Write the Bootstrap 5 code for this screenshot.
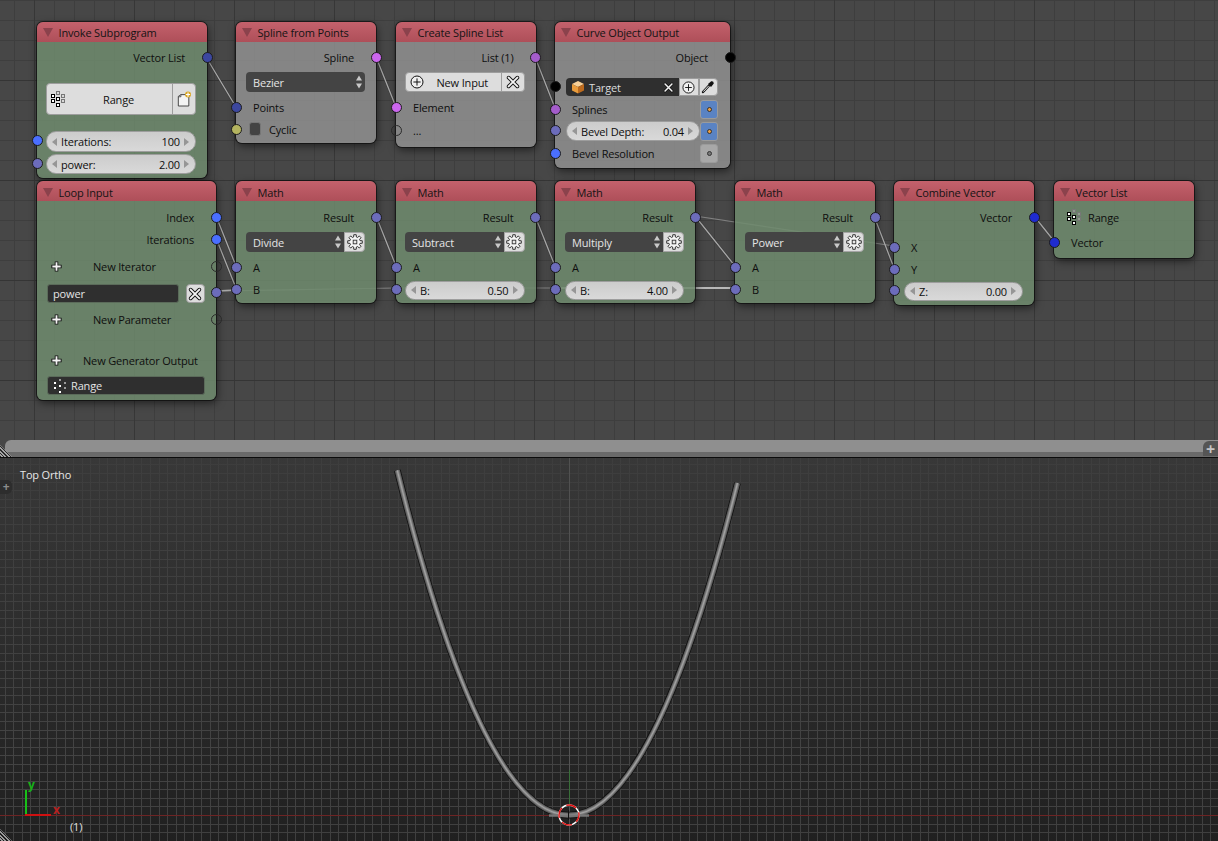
<!DOCTYPE html>
<html lang="en">
<head>
  <meta charset="UTF-8" />
  <meta name="viewport" content="width=device-width, initial-scale=1.0"/>
  <title>Node Editor</title>
  <link href="https://cdn.jsdelivr.net/npm/bootstrap@5.3.3/dist/css/bootstrap.min.css" rel="stylesheet">
  <style>
    body { background: #222; font: 11px/1 "Open Sans", "Noto Sans", sans-serif; letter-spacing: -.16px; color: #0e0e0e; }
    .ed-top {
      height: 440px;
      background-color: #474747;
      background-image:
        linear-gradient(#353535 1px, transparent 1px),
        linear-gradient(90deg, #373737 1px, transparent 1px),
        linear-gradient(#3e3e3e 1px, transparent 1px),
        linear-gradient(90deg, #3e3e3e 1px, transparent 1px);
      background-size: 100px 100px, 100px 100px, 20px 20px, 20px 20px;
      background-position: 0 80px, 34px 0, 0 0, 14px 0;
    }
    .ed-links { left: 0; top: 0; width: 1218px; height: 440px; }
    .lk-under { stroke: #2c2c2c; stroke-width: 2.4; opacity: .45; fill: none; }
    .lk { stroke: #a9a9a9; stroke-width: 1.3; fill: none; }
    .lk-faint { stroke: #a9a9a9; stroke-width: 1.2; opacity: .6; fill: none; }
    .lk-thick { stroke: #b8b8b8; stroke-width: 2; fill: none; }

    /* nodes, placed on the canvas */
    .card.nd { position: absolute; border: 0; border-radius: 6px; background: transparent;
      box-shadow: 0 0 0 1px rgba(15,15,15,.75), 1px 3px 9px rgba(0,0,0,.55); }
    #n-invoke { left: 37px; top: 22px; width: 170px; height: 156px; }
    #n-spline { left: 236px; top: 22px; width: 140px; height: 121px; }
    #n-list { left: 396px; top: 22px; width: 139.5px; height: 125px; }
    #n-curve { left: 555px; top: 22px; width: 175px; height: 146px; }
    #n-loop { left: 37px; top: 181px; width: 179px; height: 219px; }
    #n-m1 { left: 236px; top: 181px; width: 140px; height: 122px; }
    #n-m2 { left: 396px; top: 181px; width: 139.5px; height: 122px; }
    #n-m3 { left: 555px; top: 181px; width: 140px; height: 122px; }
    #n-m4 { left: 735px; top: 181px; width: 140px; height: 122px; }
    #n-comb { left: 894px; top: 181px; width: 140px; height: 124px; }
    #n-vlist { left: 1054px; top: 181px; width: 140px; height: 77px; }

    .card-header.nd-head { height: 20px; padding: 0 0 0 6px; border: 0; border-radius: 6px 6px 0 0;
      background: linear-gradient(#c4616c, #ae4f59); color: #141414; font-size: 11px; }
    .nd-low .card-header.nd-head { padding-top: 2px; }
    .nd-tri { width: 0; height: 0; margin-right: 5.5px; border: 5px solid transparent; border-bottom: 0; border-top: 9px solid #8b424c; }
    .card-body.nd-green, .card-body.nd-gray { padding: 0; border-radius: 0 0 6px 6px; }
    .card-body.nd-green { background: rgba(111,139,109,.86); }
    .card-body.nd-gray { background: rgba(143,143,143,.86); }

    .nd-r { position: relative; height: 22px; }
    .nd-t { padding-bottom: 2px; }
    .nd-out { padding-right: 22px; justify-content: flex-end; padding-bottom: 2px; }
    .nd-in { padding-left: 17px; padding-bottom: 2px; }
    .nd-w { padding: 0 11px 0 10px; }
    .nd-w2 { padding: 0 12px 0 11px; }
    .nd-w3 { padding: 0 11px 0 9px; }
    .g1 { margin-top: 1px; } .g2 { margin-top: 2px; } .g3 { margin-top: 3px; } .g4 { margin-top: 4px; }
    .g5 { margin-top: 5px; } .g6 { margin-top: 6px; } .g8 { margin-top: 8px; } .g9 { margin-top: 9px; }
    .g14 { margin-top: 14px; } .g16 { margin-top: 16px; } .g19 { margin-top: 19px; }
    .gm1 { margin-top: -1px; }
    .h18 { height: 18px; } .h19 { height: 19px; } .h20 { height: 20px; } .h21 { height: 21px; } .h32 { height: 32px; }

    /* sockets */
    .sk { position: absolute; top: calc(50% - 6.5px); width: 11px; height: 11px; border-radius: 50%; border: 1px solid #1c1c1c; z-index: 2; }
    .sk-l { left: -5.5px; } .sk-r { right: -5.5px; }
    .sk-num { background: #6c6cbb; }
    .sk-int { background: #4a6fff; }
    .sk-vec { background: #3c479f; }
    .sk-vec2 { background: #1f2bcf; }
    .sk-spl { background: #cc66ef; }
    .sk-spl2 { background: #a45ccb; }
    .sk-bool { background: #b4b45f; }
    .sk-obj { background: #000; }
    .sk-none { background: transparent; border-color: #2a2a2a; }

    /* widgets */
    .btn.nd-btn { padding: 0; border-radius: 4px; border: 1px solid #9d9d9d; background: #dddddd; color: #111; font-size: 11px; line-height: 1; letter-spacing: inherit; }
    .nd-pill { border-radius: 10px; border: 1px solid #9d9d9d; background: linear-gradient(#cccccc, #d9d9d9); padding: 0 6px 0 5px; }
    .nd-arw { width: 0; height: 0; border: 4px solid transparent; }
    .nd-arw-l { border-left: 0; border-right: 5px solid #969696; }
    .nd-arw-r { border-right: 0; border-left: 5px solid #969696; }
    .nd-sel { border-radius: 4px; background: #444; color: #e4e4e4; padding: 0 3px 0 7px; flex: 1 1 auto; }
    .nd-sel-cut { border-radius: 4px 0 0 4px; }
    .btn.nd-gear { width: 21px; height: 20px; border-radius: 0 4px 4px 0; border-color: #a5a5a5; }
    .nd-dark { border-radius: 3px; background: #2f2f2f; color: #e4e4e4; padding: 0 5px; border: 1px solid #5b6b5a; }
    .nd-target { width: 113px; border-radius: 4px 0 0 4px; background: #2f2f2f; color: #dcdcdc; padding: 0 5px; }
    .btn.nd-sq { width: 19.5px; height: 19px; border-radius: 0; flex: none; }
    .btn.nd-rnd { border-radius: 4px; }
    .nd-end { border-radius: 0 4px 4px 0 !important; }
    .nd-chk { width: 12px; height: 14px; flex: none; border-radius: 3px; background: #444; border: 1px solid #777; margin-right: 8px; }
    .nd-key { width: 18px; height: 19px; border-radius: 3px; flex: none; border: 1px solid #9b9b9b; }
    .nd-key-on { background: #5a83c3; }
    .nd-key-off { background: #a8a8a8; }
    .nd-kr { margin-right: 12px; }
    .nd-dot { width: 5px; height: 5px; border-radius: 50%; border: 1px solid #333; }
    .nd-key-on .nd-dot { background: #f0a040; }
    .nd-key-off .nd-dot { background: #777; }
    .nd-split { border-left: 1px solid #9d9d9d; }
    .nd-i13 { margin-left: 13px; }
    .nd-ml7 { margin-left: 7px; } .nd-ml21 { margin-left: 20px; } .nd-ml31 { margin-left: 30px; }

    /* strip between the two editors */
    .ed-strip { height: 18px; background: #474747; border-bottom: 1px solid #0c0c0c; padding-left: 5px; }
    .ed-bar { height: 17px; border-radius: 6px 0 0 0; background: linear-gradient(#8f8f8f 12px, #6a6a6a 12px); }
    .ed-hatch { left: 0; bottom: 0; width: 12px; height: 12px; clip-path: polygon(0 0, 100% 100%, 0 100%);
      background: repeating-linear-gradient(45deg, #2a2a2a 0 1px, #a5a5a5 1px 2.4px); }
    .ed-plus { right: 0; bottom: 1px; width: 15px; height: 15px; border-radius: 6px 0 0 0; background: #555; color: #c4c4c4; font-size: 16px; font-weight: 700; }

    /* 3d view */
    .ed-view { height: 383px; background: linear-gradient(#383838, #202020); }
    .ed-view svg { left: 0; top: 0; width: 1218px; height: 383px; }
    .vw-label { left: 20px; top: 11px; color: #e6e6e6; }
    .vw-tab { left: 0; top: 22px; width: 12px; height: 14px; border-radius: 0 5px 5px 0; background: #2d2d2d; color: #8c8c8c; font-size: 12px; font-weight: 700; }
    .vw-txt { font: 11px "Open Sans", "Noto Sans", sans-serif; }
    .vw-ax { font: 700 12px "Open Sans", "Noto Sans", sans-serif; }
    .vw-hatch { left: 0; bottom: 0; width: 12px; height: 12px; clip-path: polygon(0 0, 100% 100%, 0 100%);
      background: repeating-linear-gradient(45deg, #1c1c1c 0 1px, #9a9a9a 1px 2.4px); }
  </style>
</head>
<body class="d-flex flex-column vh-100 overflow-hidden">
  <svg width="0" height="0" class="position-absolute">
    <symbol id="i-range" viewBox="0 0 14 16">
      <g stroke="#777" fill="#cfcfcf" fill-opacity=".35" stroke-width="1">
        <rect x="5.5" y="0.5" width="3" height="3"/><rect x="10.5" y="3.5" width="3" height="3"/><rect x="10.5" y="8.5" width="3" height="3"/>
      </g>
      <g stroke="#000" fill="#fff" stroke-width="1">
        <rect x="0.5" y="3.5" width="3" height="3"/><rect x="0.5" y="8.5" width="3" height="3"/><rect x="5.5" y="6.5" width="3" height="3"/><rect x="5.5" y="12.5" width="3" height="3"/>
      </g>
    </symbol>
    <symbol id="i-range-d" viewBox="0 0 14 16">
      <g fill="#fff"><rect x="1" y="4" width="2" height="2"/><rect x="1" y="9" width="2" height="2"/><rect x="6" y="7" width="2" height="2"/><rect x="6" y="13" width="2" height="2"/></g>
      <g fill="#9a9a9a"><rect x="6" y="1" width="2" height="2"/><rect x="11" y="4" width="2" height="2"/><rect x="11" y="9" width="2" height="2"/></g>
    </symbol>
    <symbol id="i-new" viewBox="0 0 16 17">
      <path d="M1.5 5.5 L4.5 3.5 H13.5 V16.5 H1.5 Z" fill="#f4f4f4" stroke="#333" stroke-width="1"/>
      <path d="M1.5 6 H4.5 V3.5" fill="#aaa" stroke="#333" stroke-width=".7"/>
      <circle cx="12.6" cy="3.4" r="3.4" fill="#d9a521"/>
      <path d="M12.6 1 V5.8 M10.2 3.4 H15" stroke="#fff" stroke-width="1.3"/>
    </symbol>
    <symbol id="i-x" viewBox="0 0 16 16">
      <path d="M3 3 L13 13 M13 3 L3 13" stroke="#111" stroke-width="4.2" stroke-linecap="round"/>
      <path d="M3 3 L13 13 M13 3 L3 13" stroke="#f4f4f4" stroke-width="2.2" stroke-linecap="round"/>
    </symbol>
    <symbol id="i-plus" viewBox="0 0 14 14">
      <path d="M7 1.5 V12.5 M1.5 7 H12.5" stroke="#111" stroke-width="3.8"/>
      <path d="M7 2.5 V11.5 M2.5 7 H11.5" stroke="#f4f4f4" stroke-width="2"/>
    </symbol>
    <symbol id="i-cplus" viewBox="0 0 14 14">
      <circle cx="7" cy="7" r="6" fill="#f0f0f0" stroke="#111" stroke-width="1"/>
      <path d="M7 3.4 V10.6 M3.4 7 H10.6" stroke="#111" stroke-width="1"/>
    </symbol>
    <symbol id="i-gear" viewBox="0 0 16 16">
      <path id="gear-path" fill="#f6f6f6" stroke="#222" stroke-width=".9" stroke-linejoin="round"/>
      <rect x="6.2" y="6.2" width="3.6" height="3.6" fill="#eaeaea" stroke="#333" stroke-width=".9"/>
    </symbol>
    <symbol id="i-cube" viewBox="0 0 14 14">
      <path d="M7 1 L13 4 L7 7 L1 4 Z" fill="#f6cf97"/>
      <path d="M1 4 L7 7 V13.5 L1 10.5 Z" fill="#e99c3c"/>
      <path d="M13 4 L7 7 V13.5 L13 10.5 Z" fill="#bb6a1e"/>
    </symbol>
    <symbol id="i-drop" viewBox="0 0 14 14">
      <path d="M2 12 L8 5.5" stroke="#111" stroke-width="2.4" stroke-linecap="round"/>
      <path d="M2.3 11.6 L7.8 5.8" stroke="#f0f0f0" stroke-width="1"/>
      <path d="M7 4 L10.2 1.3 Q12.6 0.7 12.8 3.6 L10 7 Z" fill="#111"/>
    </symbol>
    <symbol id="i-updown" viewBox="0 0 6 14">
      <path d="M3 0.5 L6 5.5 H0 Z M3 13.5 L6 8.5 H0 Z" fill="#c9c9c9"/>
    </symbol>
    <linearGradient id="grid-fade" gradientUnits="userSpaceOnUse" x1="0" y1="458" x2="0" y2="760">
      <stop offset="0" stop-color="#fff" stop-opacity=".03"/>
      <stop offset="1" stop-color="#fff" stop-opacity=".14"/>
    </linearGradient>
  </svg>

  <div class="ed-top position-relative flex-shrink-0">
    <svg class="ed-links position-absolute" viewBox="0 0 1218 440">
      <g>
        <path d="M206 57 L236 107 M376 57 L396 107 M535 57 L555 108 M216 216 L236 266 M216 238 L236 288 M376 216 L396 266 M535 216 L555 266 M695 216 L735 266 M874 216 L894 268 M1034 216 L1054 241" class="lk-under"/>
        <path d="M206 57 L236 107 M376 57 L396 107 M535 57 L555 108 M216 216 L236 266 M216 238 L236 288 M376 216 L396 266 M535 216 L555 266 M695 216 L735 266 M874 216 L894 268 M1034 216 L1054 241" class="lk"/>
        <path d="M216 291 L396 288 M396 288 L555 288 M695 216 L894 246" class="lk-faint"/>
        <path d="M216 291 L236 290" class="lk"/>
        <path d="M555 288 L735 288" class="lk-thick"/>
      </g>
    </svg>

    <!-- first row of nodes -->
    <div class="card nd" id="n-invoke">
      <div class="card-header nd-head d-flex align-items-center"><span class="nd-tri"></span>Invoke Subprogram</div>
      <div class="card-body nd-green">
        <div class="nd-r d-flex align-items-center nd-out g5">Vector List<span class="sk sk-r sk-vec"></span></div>
        <div class="nd-w3 d-flex h32 g14">
          <button class="btn nd-btn d-flex align-items-center w-100 h-100">
            <svg width="14" height="16" class="ms-1"><use href="#i-range"/></svg>
            <span class="flex-grow-1 text-center">Range</span>
            <span class="nd-split h-100 d-flex align-items-center ps-1 pe-1"><svg width="14" height="16"><use href="#i-new"/></svg></span>
          </button>
        </div>
        <div class="nd-r nd-w3 d-flex align-items-center h21 g16">
          <span class="sk sk-l sk-int"></span>
          <div class="nd-pill d-flex align-items-center w-100 h-100"><i class="nd-arw nd-arw-l me-1"></i>Iterations:<span class="ms-auto me-1">100</span><i class="nd-arw nd-arw-r"></i></div>
        </div>
        <div class="nd-r nd-w3 d-flex align-items-center h20 g2">
          <span class="sk sk-l sk-num"></span>
          <div class="nd-pill d-flex align-items-center w-100 h-100"><i class="nd-arw nd-arw-l me-1"></i>power:<span class="ms-auto me-1">2.00</span><i class="nd-arw nd-arw-r"></i></div>
        </div>
      </div>
    </div>

    <div class="card nd" id="n-spline">
      <div class="card-header nd-head d-flex align-items-center"><span class="nd-tri"></span>Spline from Points</div>
      <div class="card-body nd-gray">
        <div class="nd-r d-flex align-items-center nd-out g5">Spline<span class="sk sk-r sk-spl"></span></div>
        <div class="nd-w d-flex h20 g3"><div class="nd-sel d-flex align-items-center justify-content-between">Bezier<svg width="6" height="14"><use href="#i-updown"/></svg></div></div>
        <div class="nd-r d-flex align-items-center nd-in g5">Points<span class="sk sk-l sk-vec"></span></div>
        <div class="nd-r d-flex align-items-center nd-t"><span class="sk sk-l sk-bool"></span><span class="nd-chk nd-i13"></span>Cyclic</div>
      </div>
    </div>

    <div class="card nd" id="n-list">
      <div class="card-header nd-head d-flex align-items-center"><span class="nd-tri"></span>Create Spline List</div>
      <div class="card-body nd-gray">
        <div class="nd-r d-flex align-items-center nd-out g5">List (1)<span class="sk sk-r sk-spl2"></span></div>
        <div class="nd-w3 d-flex h20 g3">
          <button class="btn nd-btn d-flex align-items-center w-100 h-100">
            <svg width="14" height="14" class="ms-1"><use href="#i-cplus"/></svg>
            <span class="flex-grow-1 text-center">New Input</span>
            <span class="nd-split h-100 d-flex align-items-center px-1"><svg width="14" height="14"><use href="#i-x"/></svg></span>
          </button>
        </div>
        <div class="nd-r d-flex align-items-center nd-in g5">Element<span class="sk sk-l sk-spl"></span></div>
        <div class="nd-r d-flex align-items-center nd-in g1">...<span class="sk sk-l sk-none"></span></div>
      </div>
    </div>

    <div class="card nd" id="n-curve">
      <div class="card-header nd-head d-flex align-items-center"><span class="nd-tri"></span>Curve Object Output</div>
      <div class="card-body nd-gray">
        <div class="nd-r d-flex align-items-center nd-out g5">Object<span class="sk sk-r sk-obj"></span></div>
        <div class="nd-r nd-w2 d-flex align-items-center h18 g9">
          <span class="sk sk-l sk-obj"></span>
          <div class="nd-target d-flex align-items-center h-100"><svg width="14" height="14" class="me-1"><use href="#i-cube"/></svg>Target<svg width="11" height="11" class="ms-auto"><use href="#i-x"/></svg></div>
          <button class="btn nd-btn nd-sq d-flex align-items-center justify-content-center h-100"><svg width="13" height="13"><use href="#i-cplus"/></svg></button>
          <button class="btn nd-btn nd-sq nd-end d-flex align-items-center justify-content-center h-100"><svg width="14" height="14"><use href="#i-drop"/></svg></button>
        </div>
        <div class="nd-r d-flex align-items-center justify-content-between nd-in g3"><span class="sk sk-l sk-spl2"></span>Splines<span class="nd-key nd-key-on nd-kr d-flex align-items-center justify-content-center"><span class="nd-dot"></span></span></div>
        <div class="nd-r nd-w2 d-flex align-items-center h20">
          <span class="sk sk-l sk-num"></span>
          <div class="nd-pill d-flex align-items-center flex-grow-1 h-100"><i class="nd-arw nd-arw-l me-1"></i>Bevel Depth:<span class="ms-auto me-1">0.04</span><i class="nd-arw nd-arw-r"></i></div>
          <span class="nd-key nd-key-on d-flex align-items-center justify-content-center"><span class="nd-dot"></span></span>
        </div>
        <div class="nd-r d-flex align-items-center justify-content-between nd-in g2"><span class="sk sk-l sk-int"></span>Bevel Resolution<span class="nd-key nd-key-off nd-kr d-flex align-items-center justify-content-center"><span class="nd-dot"></span></span></div>
      </div>
    </div>

    <!-- second row -->
    <div class="nd-low">
    <div class="card nd" id="n-loop">
      <div class="card-header nd-head d-flex align-items-center"><span class="nd-tri"></span>Loop Input</div>
      <div class="card-body nd-green">
        <div class="nd-r d-flex align-items-center nd-out g6">Index<span class="sk sk-r sk-int"></span></div>
        <div class="nd-r d-flex align-items-center nd-out">Iterations<span class="sk sk-r sk-int"></span></div>
        <div class="nd-r d-flex align-items-center nd-t g5"><svg width="13" height="13" class="nd-i13"><use href="#i-plus"/></svg><span class="nd-ml31">New Iterator</span><span class="sk sk-r sk-none"></span></div>
        <div class="nd-r nd-w d-flex align-items-center h19 g6">
          <span class="sk sk-r sk-num"></span>
          <div class="nd-dark d-flex align-items-center h-100 flex-grow-1">power</div>
          <button class="btn nd-btn nd-sq nd-rnd nd-ml7 d-flex align-items-center justify-content-center h-100"><svg width="14" height="14"><use href="#i-x"/></svg></button>
        </div>
        <div class="nd-r d-flex align-items-center nd-t g6"><svg width="13" height="13" class="nd-i13"><use href="#i-plus"/></svg><span class="nd-ml31">New Parameter</span><span class="sk sk-r sk-none"></span></div>
        <div class="nd-r d-flex align-items-center nd-t g19"><svg width="13" height="13" class="nd-i13"><use href="#i-plus"/></svg><span class="nd-ml21">New Generator Output</span></div>
        <div class="nd-w d-flex h19 g4"><div class="nd-dark d-flex align-items-center w-100 h-100"><svg width="14" height="16" class="me-1"><use href="#i-range-d"/></svg>Range</div></div>
      </div>
    </div>

    <div class="card nd" id="n-m1">
      <div class="card-header nd-head d-flex align-items-center"><span class="nd-tri"></span>Math</div>
      <div class="card-body nd-green">
        <div class="nd-r d-flex align-items-center nd-out g6">Result<span class="sk sk-r sk-num"></span></div>
        <div class="nd-w d-flex h20 g3"><div class="nd-sel nd-sel-cut d-flex align-items-center justify-content-between">Divide<svg width="6" height="14"><use href="#i-updown"/></svg></div><button class="btn nd-btn nd-gear d-flex align-items-center justify-content-center"><svg width="16" height="16"><use href="#i-gear"/></svg></button></div>
        <div class="nd-r d-flex align-items-center nd-in g5">A<span class="sk sk-l sk-num"></span></div>
        <div class="nd-r d-flex align-items-center nd-in">B<span class="sk sk-l sk-num"></span></div>
      </div>
    </div>

    <div class="card nd" id="n-m2">
      <div class="card-header nd-head d-flex align-items-center"><span class="nd-tri"></span>Math</div>
      <div class="card-body nd-green">
        <div class="nd-r d-flex align-items-center nd-out g6">Result<span class="sk sk-r sk-num"></span></div>
        <div class="nd-w3 d-flex h20 g3"><div class="nd-sel nd-sel-cut d-flex align-items-center justify-content-between">Subtract<svg width="6" height="14"><use href="#i-updown"/></svg></div><button class="btn nd-btn nd-gear d-flex align-items-center justify-content-center"><svg width="16" height="16"><use href="#i-gear"/></svg></button></div>
        <div class="nd-r d-flex align-items-center nd-in g5">A<span class="sk sk-l sk-num"></span></div>
        <div class="nd-r nd-w3 d-flex align-items-center"><span class="sk sk-l sk-num"></span><div class="nd-pill d-flex align-items-center w-100 h19"><i class="nd-arw nd-arw-l me-1"></i>B:<span class="ms-auto me-1">0.50</span><i class="nd-arw nd-arw-r"></i></div></div>
      </div>
    </div>

    <div class="card nd" id="n-m3">
      <div class="card-header nd-head d-flex align-items-center"><span class="nd-tri"></span>Math</div>
      <div class="card-body nd-green">
        <div class="nd-r d-flex align-items-center nd-out g6">Result<span class="sk sk-r sk-num"></span></div>
        <div class="nd-w d-flex h20 g3"><div class="nd-sel nd-sel-cut d-flex align-items-center justify-content-between">Multiply<svg width="6" height="14"><use href="#i-updown"/></svg></div><button class="btn nd-btn nd-gear d-flex align-items-center justify-content-center"><svg width="16" height="16"><use href="#i-gear"/></svg></button></div>
        <div class="nd-r d-flex align-items-center nd-in g5">A<span class="sk sk-l sk-num"></span></div>
        <div class="nd-r nd-w d-flex align-items-center"><span class="sk sk-l sk-num"></span><div class="nd-pill d-flex align-items-center w-100 h19"><i class="nd-arw nd-arw-l me-1"></i>B:<span class="ms-auto me-1">4.00</span><i class="nd-arw nd-arw-r"></i></div></div>
      </div>
    </div>

    <div class="card nd" id="n-m4">
      <div class="card-header nd-head d-flex align-items-center"><span class="nd-tri"></span>Math</div>
      <div class="card-body nd-green">
        <div class="nd-r d-flex align-items-center nd-out g6">Result<span class="sk sk-r sk-num"></span></div>
        <div class="nd-w d-flex h20 g3"><div class="nd-sel nd-sel-cut d-flex align-items-center justify-content-between">Power<svg width="6" height="14"><use href="#i-updown"/></svg></div><button class="btn nd-btn nd-gear d-flex align-items-center justify-content-center"><svg width="16" height="16"><use href="#i-gear"/></svg></button></div>
        <div class="nd-r d-flex align-items-center nd-in g5">A<span class="sk sk-l sk-num"></span></div>
        <div class="nd-r d-flex align-items-center nd-in">B<span class="sk sk-l sk-num"></span></div>
      </div>
    </div>

    <div class="card nd" id="n-comb">
      <div class="card-header nd-head d-flex align-items-center"><span class="nd-tri"></span>Combine Vector</div>
      <div class="card-body nd-green">
        <div class="nd-r d-flex align-items-center nd-out g6">Vector<span class="sk sk-r sk-vec2"></span></div>
        <div class="nd-r d-flex align-items-center nd-in g8">X<span class="sk sk-l sk-num"></span></div>
        <div class="nd-r d-flex align-items-center nd-in">Y<span class="sk sk-l sk-num"></span></div>
        <div class="nd-r nd-w d-flex align-items-center gm1"><span class="sk sk-l sk-num"></span><div class="nd-pill d-flex align-items-center w-100 h19"><i class="nd-arw nd-arw-l me-1"></i>Z:<span class="ms-auto me-1">0.00</span><i class="nd-arw nd-arw-r"></i></div></div>
      </div>
    </div>

    <div class="card nd" id="n-vlist">
      <div class="card-header nd-head d-flex align-items-center"><span class="nd-tri"></span>Vector List</div>
      <div class="card-body nd-green">
        <div class="nd-r d-flex align-items-center nd-t g6"><svg width="14" height="16" class="nd-i13"><use href="#i-range"/></svg><span class="nd-ml7">Range</span></div>
        <div class="nd-r d-flex align-items-center nd-in g3">Vector<span class="sk sk-l sk-vec2"></span></div>
      </div>
    </div>
    </div>
  </div>

  <div class="ed-strip position-relative flex-shrink-0">
    <div class="ed-bar"></div>
    <div class="ed-hatch position-absolute"></div>
    <div class="ed-plus position-absolute d-flex align-items-center justify-content-center">+</div>
  </div>

  <div class="ed-view position-relative flex-grow-1">
    <svg class="position-absolute" viewBox="0 458 1218 383">
      <path id="grid-minor" fill="none" stroke="url(#grid-fade)" stroke-width="1" shape-rendering="crispEdges"/>
      <path d="M0 815.5 H1218" stroke="#6e2424" stroke-width="1" fill="none"/>
      <path d="M569.5 458 V841" stroke="#5a5a5a" stroke-opacity=".7" stroke-width="1"/>
      <path d="M569.5 770 V806" stroke="#2f7a2f" stroke-opacity=".7" stroke-width="1"/>
      <!-- curve: y = x^2 -->
      <g fill="none">
        <path d="M397.3 470.4 Q567.4 1153.5 737.5 483" stroke="#101010" stroke-width="6.8"/>
        <path d="M397.3 470.4 Q567.4 1153.5 737.5 483" stroke="#5e5e5e" stroke-width="5.2"/>
        <path d="M397.3 470.4 Q567.4 1153.5 737.5 483" stroke="#808080" stroke-width="3"/>
        <path d="M397.3 470.4 Q567.4 1153.5 737.5 483" stroke="#a2a2a2" stroke-width="1.2"/>
      </g>
      <path d="M549 815.5 H589" stroke="#777" stroke-width="2.4"/>
      <!-- 3d cursor -->
      <circle cx="569" cy="815" r="10" fill="none" stroke="#fff" stroke-width="1.4"/>
      <circle cx="569" cy="815" r="10" fill="none" stroke="#e01010" stroke-width="1.4" stroke-dasharray="10.5 5.2" stroke-dashoffset="3"/>
      <path d="M568.5 810 V820" stroke="#111" stroke-width="1"/>
      <!-- axis widget -->
      <path d="M26 790 V815" stroke="#18c018" stroke-width="2"/>
      <path d="M25 815 H51" stroke="#d01010" stroke-width="2"/>
      <text x="28" y="789" class="vw-ax" fill="#18b018">y</text>
      <text x="53" y="814" class="vw-ax" fill="#b82020">x</text>
      <text x="70" y="831" class="vw-txt" fill="#e0e0e0">(1)</text>
    </svg>
    <div class="vw-label position-absolute">Top Ortho</div>
    <div class="vw-tab position-absolute d-flex align-items-center justify-content-center">+</div>
    <div class="vw-hatch position-absolute"></div>
  </div>

  <script>
    // viewport grid, centred on the world origin
    var step = 8.55, d = '';
    for (var i = -70; i < 80; i++) {
      var x = Math.round(569 + i * step) + 0.5;
      d += 'M' + x + ' 458V841';
    }
    for (var j = -42; j < 4; j++) {
      var y = Math.round(815 + j * step) + 0.5;
      d += 'M0 ' + y + 'H1218';
    }
    document.getElementById('grid-minor').setAttribute('d', d);

    // gear outline, 8 teeth
    var g = '';
    for (var t = 0; t < 8; t++) {
      var a = t * Math.PI / 4;
      [[-.26, 5.2], [-.17, 7.4], [.17, 7.4], [.26, 5.2]].forEach(function (p, k) {
        g += (t === 0 && k === 0 ? 'M' : 'L') + (8 + p[1] * Math.cos(a + p[0])).toFixed(2) + ' ' + (8 + p[1] * Math.sin(a + p[0])).toFixed(2);
      });
    }
    document.getElementById('gear-path').setAttribute('d', g + 'Z');
  </script>
  <script src="https://cdn.jsdelivr.net/npm/bootstrap@5.3.3/dist/js/bootstrap.bundle.min.js"></script>
</body>
</html>
